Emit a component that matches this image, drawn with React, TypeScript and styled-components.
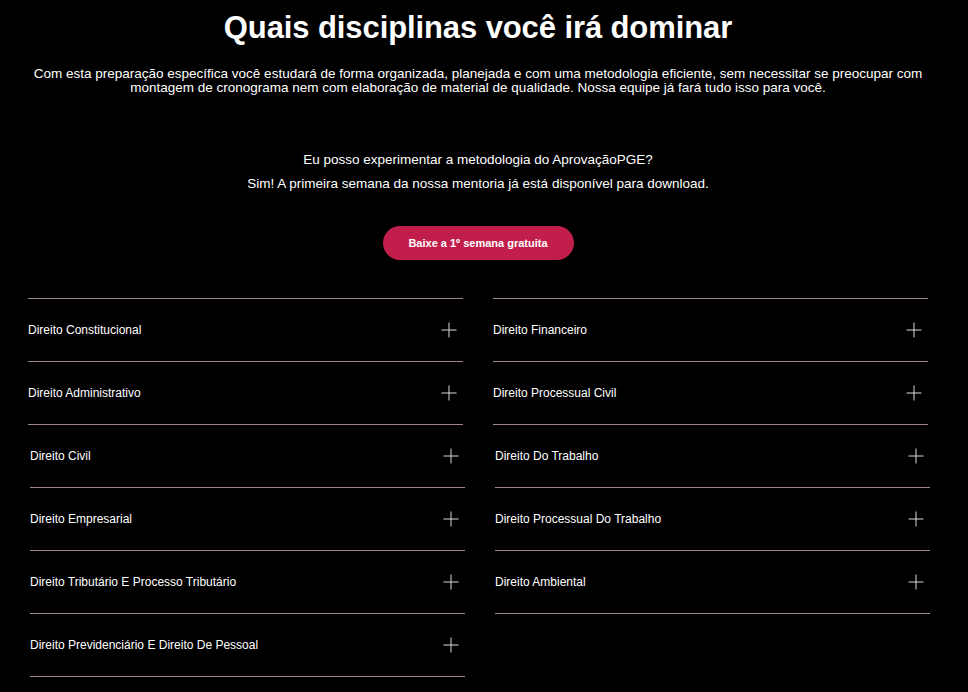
import styled, { createGlobalStyle } from 'styled-components'

const GlobalStyle = createGlobalStyle`
  html, body {
    margin: 0;
    padding: 0;
    background: #000000;
  }
  body {
    font-family: 'Liberation Sans', Arial, sans-serif;
    color: #ffffff;
  }
`

const firstGroup = {
  left: ['Direito Constitucional', 'Direito Administrativo'],
  right: ['Direito Financeiro', 'Direito Processual Civil'],
}

const secondGroup = {
  left: [
    'Direito Civil',
    'Direito Empresarial',
    'Direito Tributário E Processo Tributário',
    'Direito Previdenciário E Direito De Pessoal',
  ],
  right: [
    'Direito Do Trabalho',
    'Direito Processual Do Trabalho',
    'Direito Ambiental',
  ],
}

const PlusIcon = () => (
  <svg width='16' height='16' viewBox='0 0 16 16'>
    <path d='M8 0.5V15.5M0.5 8H15.5' stroke='#d9d9d9' strokeWidth='1' />
  </svg>
)

const AccordionColumn = (props: { items: string[]; bordered?: boolean }) => (
  <Column>
    {props.items.map((label, index) => (
      <Item key={label} $topBorder={props.bordered && index === 0}>
        <ItemTitle>{label}</ItemTitle>
        <IconWrapper>
          <PlusIcon />
        </IconWrapper>
      </Item>
    ))}
  </Column>
)

const App = () => {
  return (
    <>
      <GlobalStyle />
      <Page>
        <Title>Quais disciplinas você irá dominar</Title>
        <Lead>
          Com esta preparação específica você estudará de forma organizada,
          planejada e com uma metodologia eficiente, sem necessitar se
          preocupar com montagem de cronograma nem com elaboração de material
          de qualidade. Nossa equipe já fará tudo isso para você.
        </Lead>
        <Question>
          <p>Eu posso experimentar a metodologia do AprovaçãoPGE?</p>
          <p>
            Sim! A primeira semana da nossa mentoria já está disponível para
            download.
          </p>
        </Question>
        <DownloadButton>Baixe a 1º semana gratuita</DownloadButton>
        <Disciplines>
          <Grid $offset={0}>
            <AccordionColumn items={firstGroup.left} bordered />
            <AccordionColumn items={firstGroup.right} bordered />
          </Grid>
          <Grid $offset={2}>
            <AccordionColumn items={secondGroup.left} />
            <AccordionColumn items={secondGroup.right} />
          </Grid>
        </Disciplines>
      </Page>
    </>
  )
}

export default App

const Page = styled.main`
  width: 956px;
  display: flex;
  flex-direction: column;
  align-items: center;
  padding-top: 10px;
`

const Title = styled.h1`
  margin: 0;
  font-size: 31px;
  font-weight: 700;
  line-height: 36px;
  text-align: center;
  letter-spacing: -0.1px;
`

const Lead = styled.p`
  width: 900px;
  margin: 21px 0 0;
  font-size: 13.5px;
  line-height: 14px;
  text-align: center;
`

const Question = styled.div`
  margin-top: 53px;
  text-align: center;
  font-size: 13.5px;

  p {
    margin: 0;
    line-height: 24px;
  }
`

const DownloadButton = styled.button`
  margin-top: 30px;
  width: 191px;
  height: 34px;
  border: none;
  border-radius: 17px;
  background: #c21e4b;
  color: #ffffff;
  font-family: 'Liberation Sans', Arial, sans-serif;
  font-size: 11px;
  font-weight: 700;
  cursor: pointer;
`

const Disciplines = styled.section`
  margin-top: 38px;
  width: 900px;
  display: flex;
  flex-direction: column;
`

const Grid = styled.div<{ $offset: number }>`
  display: grid;
  grid-template-columns: 1fr 1fr;
  column-gap: 30px;
  align-items: start;
  margin-left: ${(props) => props.$offset}px;
  margin-right: -${(props) => props.$offset}px;
`

const Column = styled.div`
  display: flex;
  flex-direction: column;
`

const Item = styled.div<{ $topBorder?: boolean }>`
  height: 62px;
  display: flex;
  align-items: center;
  justify-content: space-between;
  border-top: ${(props) => (props.$topBorder ? '1px solid #9e8789' : 'none')};
  border-bottom: 1px solid #9e8789;
  cursor: pointer;
`

const ItemTitle = styled.span`
  font-size: 12px;
  color: #ffffff;
`

const IconWrapper = styled.span`
  display: flex;
  padding-right: 6px;
  margin-top: -1px;
`
